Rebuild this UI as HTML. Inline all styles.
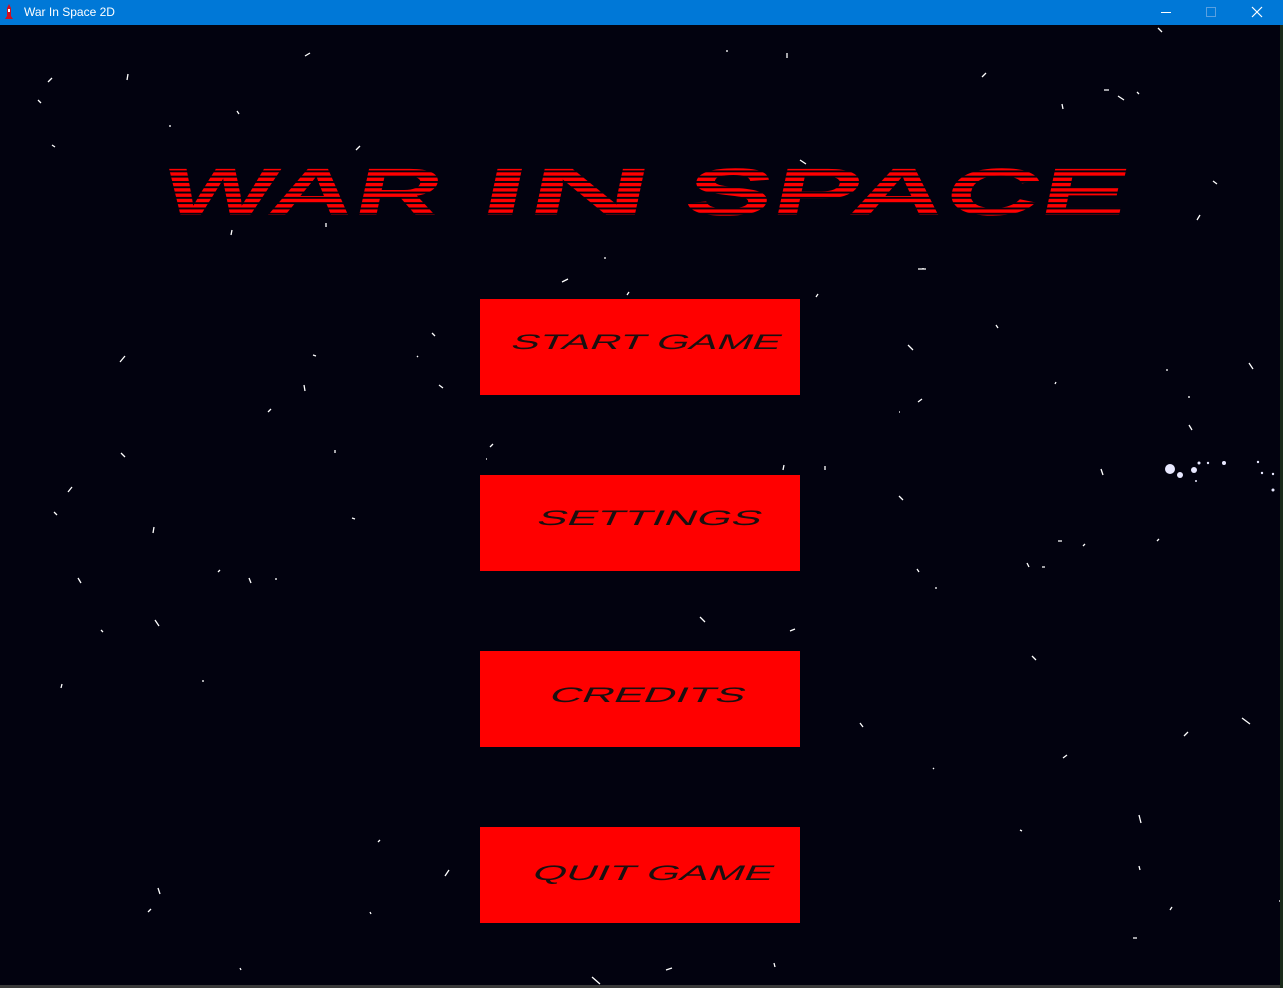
<!DOCTYPE html>
<html><head><meta charset="utf-8"><style>
html,body{margin:0;padding:0;width:1283px;height:988px;overflow:hidden;background:#02020f;font-family:"Liberation Sans",sans-serif}
#bar{position:absolute;left:0;top:0;width:1283px;height:25px;background:#0078d7;color:#fff;font-size:12px}
#bar .t{position:absolute;left:24px;top:5px}
.btn{position:absolute;left:480px;width:320px;height:96px;background:#ff0000}
svg{position:absolute;left:0;top:0}
</style></head><body>
<div id="bar">
<svg width="20" height="25" style="left:3px;top:3px"><path d="M6 1 L8 5 L8 13 L10 16 L2 16 L4 13 L4 5 Z" fill="#d01020"/><rect x="5" y="6" width="2" height="3" fill="#fff"/></svg>
<span class="t">War In Space 2D</span>
<svg width="1283" height="25"><line x1="1161" y1="12.5" x2="1171" y2="12.5" stroke="#fff"/><rect x="1206.5" y="7.5" width="9" height="9" fill="none" stroke="#5aa0e0"/><path d="M1252 7 L1262 17 M1262 7 L1252 17" stroke="#fff" stroke-width="1.2"/></svg>
</div>
<div class="btn" style="top:299px"></div>
<div class="btn" style="top:475px"></div>
<div class="btn" style="top:651px"></div>
<div class="btn" style="top:827px"></div>
<svg width="1283" height="988">
<defs><pattern id="st" width="10" height="5.3" patternUnits="userSpaceOnUse" y="167"><rect width="10" height="3.4" fill="#ff0000"/></pattern></defs>
<g fill="url(#st)" font-family="Liberation Sans" font-weight="bold" font-size="67" transform="skewX(-12)" >
<text x="205" y="215" textLength="278" lengthAdjust="spacingAndGlyphs">WAR</text>
<text x="522" y="215" textLength="170" lengthAdjust="spacingAndGlyphs">IN</text>
<text x="727" y="215" textLength="443" lengthAdjust="spacingAndGlyphs">SPACE</text>
</g>
<g fill="#1a1010" font-family="Liberation Sans" font-size="21" transform="skewX(-25)">
<text x="672" y="349" textLength="269" lengthAdjust="spacingAndGlyphs">START GAME</text>
<text x="780" y="525" textLength="224" lengthAdjust="spacingAndGlyphs">SETTINGS</text>
<text x="875" y="702" textLength="195" lengthAdjust="spacingAndGlyphs">CREDITS</text>
<text x="941" y="880" textLength="240" lengthAdjust="spacingAndGlyphs">QUIT GAME</text>
</g>
<g stroke="#fff" stroke-width="1.3">
<path d="M305 56l5-3M48 82l4-4M127 80l1-6M38 100l3 3M237 111l2 3M52 145l3 2M356 150l4-4M170 125l0 2M800 160l6 4M982 77l4-4M1062 104l1 5M1104 90l5 0M1118 96l6 4M1137 92l2 2M1158 28l4 4M727 50l0 2M787 53l0 5M1213 181l4 3M1197 220l3-5M923 268l0 1M918 269l8 0M604 258l2 0M562 282l6-3M627 295l2-3M816 297l2-3M326 223l0 4M232 230l-1 5M432 333l3 3M313 355l3 1M120 362l5-6M417 356l1 1M439 385l4 3M304 385l1 6M268 412l3-3M908 345l5 5M996 325l2 3M1055 384l1-2M1166 370l2 0M1249 363l4 6M1189 396l0 2M1189 425l3 5M918 402l4-3M899 412l1 0M490 447l3-3M486 459l1 0M783 470l1-5M825 466l0 4M121 453l4 4M335 450l0 3M68 492l4-5M54 512l3 3M153 533l1-6M352 518l3 1M899 496l4 4M1101 469l2 6M1058 541l4 0M1083 546l2-2M1157 541l2-2M1027 563l2 4M1042 567l3 0M917 569l2 3M935 588l2 0M218 572l2-2M249 578l2 5M276 578l0 2M78 578l3 5M155 620l4 6M101 630l2 2M700 617l5 5M790 631l5-2M1032 656l4 4M61 688l1-4M203 680l0 2M860 723l3 4M1184 736l4-4M1242 718l8 6M1063 758l4-3M933 768l1 1M1139 815l2 8M1020 830l2 1M378 842l2-2M445 876l4-6M158 888l2 6M148 912l3-3M370 912l1 2M1139 866l1 4M1170 910l2-3M1133 938l4 0M240 968l1 2M592 977l8 7M666 970l6-2M774 963l1 4M1280 900l0 2"/>
</g>
<g fill="#e8e8ff">
<circle cx="1170" cy="469" r="5"/><circle cx="1180" cy="475" r="3"/><circle cx="1194" cy="470" r="3"/><circle cx="1199" cy="463" r="1.5"/><circle cx="1208" cy="463" r="1.2"/><circle cx="1224" cy="463" r="2"/><circle cx="1258" cy="462" r="1.2"/><circle cx="1262" cy="473" r="1.2"/><circle cx="1273" cy="474" r="1.2"/><circle cx="1273" cy="490" r="1.5"/><circle cx="1196" cy="481" r="1"/>
</g>
<rect x="0" y="985" width="1283" height="3" fill="#3a3a3a"/>
<rect x="1280" y="25" width="3" height="963" fill="#1a2a1a"/>
</svg>
</body></html>
